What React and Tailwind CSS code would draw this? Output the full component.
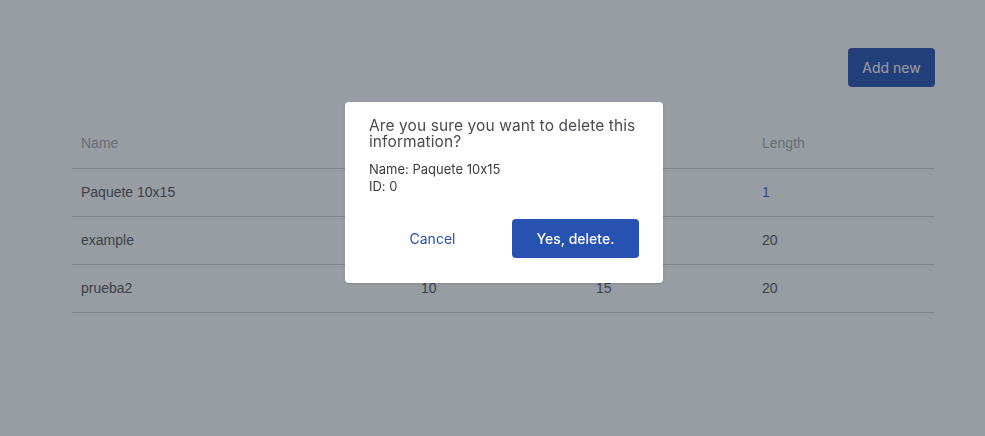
const rows = [
  { name: 'Paquete 10x15', width: '10', height: '15', length: '1', linked: true },
  { name: 'example', width: '10', height: '15', length: '20' },
  { name: 'prueba2', width: '10', height: '15', length: '20' },
];

export default function App() {
  return (
    <div className="relative min-h-[436px] bg-white pl-[72px] pr-[50px] pt-[48px] font-['Inter',sans-serif]">
      {/* Toolbar */}
      <div className="flex justify-end">
        <button className="h-[39px] w-[87px] rounded-[4px] bg-[#2852b1] text-white text-[14px]">
          Add new
        </button>
      </div>

      {/* Table */}
      <table className="mt-[33px] w-full border-collapse text-[14px] font-['Liberation_Sans',sans-serif]">
        <thead>
          <tr className="border-b border-[#d2d2d6]">
            <th className="w-[340px] h-[48px] px-[9px] text-left font-normal text-[#a5a6ac]">Name</th>
            <th className="w-[175px] px-[9px] text-left font-normal text-[#a5a6ac]">Width</th>
            <th className="w-[166px] px-[9px] text-left font-normal text-[#a5a6ac]">Height</th>
            <th className="px-[9px] text-left font-normal text-[#a5a6ac]">Length</th>
          </tr>
        </thead>
        <tbody>
          {rows.map((r) => (
            <tr key={r.name} className="border-b border-[#d2d2d6] text-[#55545a]">
              <td className="h-[48px] px-[9px]">{r.name}</td>
              <td className="px-[9px]">{r.width}</td>
              <td className="px-[9px]">{r.height}</td>
              <td className={`px-[9px] ${r.linked ? 'text-[#3a68c0]' : ''}`}>{r.length}</td>
            </tr>
          ))}
        </tbody>
      </table>

      {/* Overlay + dialog */}
      <div className="fixed inset-0 bg-[#1f2937]/[0.46]">
        <div className="absolute left-[345px] top-[102px] w-[318px] rounded-[4px] bg-white pl-6 pr-5 pt-[16px] pb-[25px] shadow [font-feature-settings:'calt'_0]">
          <h3 className="text-[15.5px] leading-[16px] text-[#4b4b52] tracking-[0.1px]">
            Are you sure you want to delete this information?
          </h3>
          <div className="mt-[11px] text-[13px] leading-[17px] text-[#3c3c42]">
            <p>Name: Paquete 10x15</p>
            <p>ID: 0</p>
          </div>
          <div className="mt-[24px] mr-1 flex items-center justify-between">
            <button className="w-[127px] h-[39px] text-[14px] text-[#2852b1]">Cancel</button>
            <button className="w-[127px] h-[39px] rounded-[4px] bg-[#2852b1] text-[14px] font-medium text-white">
              Yes, delete.
            </button>
          </div>
        </div>
      </div>
    </div>
  );
}
